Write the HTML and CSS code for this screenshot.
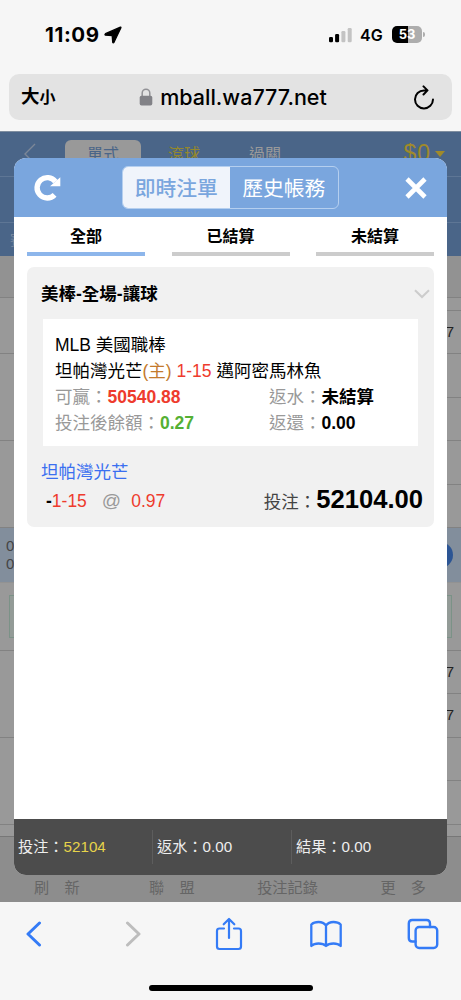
FILE: index.html
```
<!DOCTYPE html>
<html lang="zh-Hant">
<head>
    <meta charset="UTF-8">
    <meta name="viewport" content="width=device-width, initial-scale=1.0">
    <title>即時注單</title>
    <link rel="stylesheet" href="styles.css">
</head>
<body>

<div class="phone">
    <!-- Status bar -->
    <div class="status-bar">
        <span class="time">11:09</span>
        <svg class="location" width="18" height="18" viewBox="0 0 18 18"><path d="M16.4 1.2 1.5 7.7Q.4 8.6 1.5 9.2L8.2 9.6 8.7 16.2Q9.2 17.4 10 16.3L16.9 1.7Q17.1.9 16.4 1.2Z" stroke="#000" stroke-width="1.3" stroke-linejoin="round"/></svg>
        <svg class="signal" width="24" height="16" viewBox="0 0 24 16">
            <rect x="0" y="10" width="4" height="5.3" rx="1.2"/>
            <rect x="6.1" y="7" width="4" height="8.3" rx="1.2"/>
            <rect x="12.4" y="4" width="4" height="11.3" rx="1.2" fill="#c3c3c3"/>
            <rect x="18.7" y="1" width="4" height="14.3" rx="1.2" fill="#c3c3c3"/>
        </svg>
        <span class="network">4G</span>
        <div class="battery"><span>53</span></div>
    </div>

    <!-- Address bar -->
    <div class="address-bar">
        <span class="text-size">大<small>小</small></span>
        <div class="url">
            <svg width="14" height="18" viewBox="0 0 14 18"><path d="M3.2 9V5a3.8 3.8 0 0 1 7.6 0v4" fill="none" stroke="#929296" stroke-width="1.5"/><rect x=".7" y="7.7" width="12.6" height="9.8" rx="1.8" fill="#828287"/></svg>
            <span>mball.wa777.net</span>
        </div>
        <svg class="reload" width="22" height="25" viewBox="0 0 22 25" fill="none" stroke="#000" stroke-width="2" stroke-linecap="round" stroke-linejoin="round"><path d="M13 5.4H11A9 9 0 1 0 20 14.5M10.5 1.4 14.5 5.4 10.5 9.5"/></svg>
    </div>

    <!-- Web page -->
    <div class="page">
        <div class="top-nav">
            <svg class="back" width="12" height="22" viewBox="0 0 12 22" fill="none" stroke="#7c8797" stroke-width="1.4"><path d="M11 1 1 11 11 21"/></svg>
            <span class="nav-tab active">單式</span>
            <span class="nav-tab yellow">滾球</span>
            <span class="nav-tab">過關</span>
            <span class="balance">$0<i></i></span>
        </div>
        <div class="sub-nav"></div>
        <div class="sub-nav last">賽</div>

        <div class="odds">
            <div class="odds-col">
                <div class="cell gap-row"></div>
                <div class="cell first"></div>
                <div class="cell tall"></div>
                <div class="cell tall"></div>
            </div>
            <div class="odds-col right">
                <div class="cell gap-row"></div>
                <div class="cell thin"></div>
                <div class="cell">7</div>
                <div class="cell"></div>
                <div class="cell"></div>
                <div class="cell"></div>
                <div class="cell"></div>
            </div>
        </div>
        <div class="match">
            <div>0<br>0</div>
            <span class="plus">+</span>
        </div>
        <div class="team-row"><div class="team-box"></div></div>
        <div class="odds">
            <div class="odds-col">
                <div class="cell tall"></div>
                <div class="cell tall"></div>
            </div>
            <div class="odds-col right">
                <div class="cell">7</div>
                <div class="cell">7</div>
                <div class="cell"></div>
                <div class="cell"></div>
            </div>
        </div>
        <div class="page-space"></div>
        <div class="page-menu">
            <span>刷　新</span>
            <span class="league">聯　盟</span>
            <span>投注記錄</span>
            <span>更　多</span>
        </div>

        <!-- Bet list popup -->
        <div class="modal">
            <div class="modal-header">
                <svg width="28" height="28" viewBox="0 0 28 28"><path d="M20.6 20.9A10.2 10.2 0 1 1 21.4 7.6" fill="none" stroke="#fff" stroke-width="5.4"/><path d="M26.3 3.2V12.3H16Z" fill="#fff"/></svg>
                <div class="switch">
                    <span class="selected">即時注單</span>
                    <span>歷史帳務</span>
                </div>
                <svg width="22" height="22" viewBox="0 0 22 22"><path d="M2 2 20 20M20 2 2 20" stroke="#fff" stroke-width="4.6"/></svg>
            </div>

            <div class="filters">
                <span class="active">全部</span>
                <span>已結算</span>
                <span>未結算</span>
            </div>

            <div class="bet-card">
                <div class="bet-title">
                    <span>美棒-全場-讓球</span>
                    <svg width="16" height="10" viewBox="0 0 16 10" fill="none" stroke="#ccc" stroke-width="2"><path d="M1 1.2 8 8 15 1.2"/></svg>
                </div>
                <div class="bet-detail">
                    <div>MLB 美國職棒</div>
                    <div>坦帕灣光芒<span class="home">(主)</span> <span class="red">1-15</span> 邁阿密馬林魚</div>
                    <div class="detail-row">
                        <div>可贏：<b class="red">50540.88</b></div>
                        <div>返水：<b>未結算</b></div>
                    </div>
                    <div class="detail-row">
                        <div>投注後餘額：<b class="green">0.27</b></div>
                        <div>返還：<b>0.00</b></div>
                    </div>
                </div>
                <div class="bet-team">坦帕灣光芒</div>
                <div class="bet-bottom">
                    <div class="odd"><b>-</b><span class="red">1-15</span><span class="at">@</span><span class="red">0.97</span></div>
                    <div class="stake">投注：<b>52104.00</b></div>
                </div>
            </div>

            <div class="modal-footer">
                <div>投注：<span class="gold">52104</span></div>
                <div>返水：0.00</div>
                <div>結果：0.00</div>
            </div>
        </div>
    </div>

    <!-- Browser toolbar -->
    <div class="toolbar">
        <svg width="40" height="26" viewBox="0 0 16 26" stroke-width="3"><path d="M13.5 2 2 13 13.5 24"/></svg>
        <svg class="disabled" width="40" height="26" viewBox="0 0 16 26" stroke-width="3"><path d="M2.5 2 14 13 2.5 24"/></svg>
        <svg width="40" height="34" viewBox="0 0 28 34" stroke-width="2.2"><path d="M9 11.5H4.5Q2 11.5 2 14V29.5Q2 32 4.5 32H23.5Q26 32 26 29.5V14Q26 11.5 23.5 11.5H19M14 21V2.5M8.7 7.3 14 2 19.3 7.3"/></svg>
        <svg width="40" height="28" viewBox="0 0 33 28" stroke-width="2.3"><path d="M16.5 5.5Q14 2 9 2 4.5 2 1.8 4.5V26Q4.5 23.5 9 23.5 14 23.5 16.5 26 19 23.5 24 23.5 28.5 23.5 31.2 26V4.5Q28.5 2 24 2 19 2 16.5 5.5V26"/></svg>
        <svg width="40" height="32" viewBox="0 0 32 32" stroke-width="2.4"><rect x="8.6" y="9" width="21.6" height="21" rx="3.5"/><path d="M8.5 23.5H5.3Q1.8 23.5 1.8 20V5.5Q1.8 2 5.3 2H19.5Q23 2 23 5.5V9"/></svg>
    </div>
    <div class="home-bar"></div>
</div>

</body>
</html>
```

FILE: styles.css
```
* {
    box-sizing: border-box;
}

body {
    margin: 0;
    font-family: "Liberation Sans", "Noto Sans CJK TC", sans-serif;
    background-color: #f6f6f6;
    color: #000;
}

.phone {
    width: 461px;
    height: 1000px;
    overflow: hidden;
}

svg {
    display: block;
    flex: none;
}

/* Status bar */
.status-bar {
    display: flex;
    align-items: center;
    height: 74px;
    padding: 0 39px 5px 45px;
    font-family: Inter, sans-serif;
}

.time {
    width: 59px;
    font-size: 20.5px;
    font-weight: 700;
    letter-spacing: 0.6px;
}

.signal {
    margin-left: auto;
}

.network {
    width: 32px;
    margin-left: 7px;
    font-size: 16px;
    font-weight: 600;
}

.battery {
    position: relative;
    width: 30px;
    height: 17px;
    border-radius: 5px;
    background: linear-gradient(90deg, #000 53%, #adadad 53%);
    color: #fff;
    font-size: 13px;
    font-weight: 700;
    line-height: 17px;
    text-align: center;
}

.battery::after {
    content: "";
    position: absolute;
    right: -3px;
    top: 6px;
    width: 2px;
    height: 5px;
    border-radius: 0 2px 2px 0;
    background: #adadad;
}

/* Address bar */
.address-bar {
    display: flex;
    align-items: center;
    justify-content: space-between;
    height: 46px;
    margin: 0 9px 11px;
    padding: 0 17px 0 12px;
    border-radius: 10px;
    background: #e3e3e3;
}

.text-size {
    width: 50px;
    font-size: 18.5px;
    font-weight: 700;
    line-height: 46px;
}

.text-size small {
    font-size: 16px;
}

.url {
    display: flex;
    align-items: center;
    gap: 7px;
    margin-right: 18px;
    font-family: Inter, sans-serif;
    font-size: 21.5px;
    font-weight: 500;
}

/* Page behind the popup */
.page {
    position: relative;
    height: 771px;
    background: #999;
    overflow: hidden;
}

.top-nav {
    display: flex;
    align-items: flex-start;
    height: 45px;
    padding: 8px 16px 0 24px;
    background: #4a6588;
    border-top: 1px solid #7f8ea0;
    color: #9a9a9a;
    font-size: 16px;
}

.back {
    margin-top: 3px;
}

.nav-tab {
    width: 76px;
    height: 32px;
    margin-left: 5px;
    border-radius: 6px 6px 0 0;
    line-height: 30px;
    text-align: center;
}

.nav-tab.active {
    margin-left: 29px;
    background: #999;
    color: #4a6588;
}

.nav-tab.yellow {
    color: #94882c;
}

.balance {
    display: flex;
    align-items: center;
    gap: 4px;
    margin-left: auto;
    color: #a08a2a;
    font-size: 23px;
    line-height: 27px;
    letter-spacing: 1px;
}

.balance i {
    border: 5px solid transparent;
    border-top: 6px solid #a08a2a;
    border-bottom: 0;
}

.sub-nav {
    height: 46px;
    border-top: 1px solid #5e7695;
    background: #4a6588;
}

.sub-nav.last {
    height: 34px;
    padding-left: 10px;
    color: #7c8ba0;
    font-size: 14px;
    line-height: 34px;
}

.odds {
    display: flex;
}

.odds-col {
    flex: 1;
}

.cell {
    height: 43.4px;
    border-bottom: 1px solid #828282;
}

.cell.gap-row {
    height: 42px;
    background: #929292;
}

.cell.first {
    height: 56px;
}

.cell.tall {
    height: 86.8px;
}

.cell.thin {
    height: 13px;
}

.odds-col.right .cell {
    padding-right: 7px;
    color: #222;
    font-size: 15px;
    line-height: 42px;
    text-align: right;
}

.match {
    display: flex;
    align-items: center;
    justify-content: space-between;
    height: 55px;
    padding: 0 8px 0 6px;
    background: #828e9c;
    border-bottom: 1px solid #929292;
    color: #444;
    font-size: 15px;
    line-height: 18px;
}

.plus {
    width: 26px;
    height: 26px;
    border-radius: 50%;
    background: #2c5594;
    color: #bbb;
    line-height: 26px;
    text-align: center;
}

.team-row {
    height: 68px;
    padding: 12px 9px;
    border-bottom: 1px solid #828282;
}

.team-box {
    height: 43px;
    border: 1px solid #7b9287;
    background: #939b97;
}

.page-space {
    height: 11px;
}

.page-menu {
    display: flex;
    justify-content: space-between;
    height: 70px;
    padding: 39px 35px 0 34px;
    border-top: 1px solid #777;
    background: #8d8d8d;
    color: #656565;
    font-size: 15.2px;
    line-height: 24px;
}

.league {
    padding-left: 7px;
}

/* Popup */
.modal {
    position: absolute;
    top: 27px;
    left: 14px;
    display: flex;
    flex-direction: column;
    width: 433px;
    height: 717px;
    border-radius: 12px;
    background: #fff;
    overflow: hidden;
}

.modal-header {
    display: flex;
    align-items: center;
    justify-content: space-between;
    height: 59px;
    padding: 0 20px 0 20px;
    background: #7aa6de;
}

.switch {
    display: flex;
    height: 43px;
    margin-left: -7px;
    border: 1px solid #b5cfef;
    border-radius: 6px;
    color: #fff;
    font-size: 20.8px;
    line-height: 44px;
    overflow: hidden;
}

.switch span {
    width: 107.5px;
    text-align: center;
}

.switch .selected {
    background: #f0f4fb;
    color: #7aa6de;
    font-weight: 500;
}

.filters {
    display: flex;
    justify-content: space-between;
    padding: 0 13px;
}

.filters span {
    width: 118px;
    height: 39px;
    border-bottom: 4px solid #ccc;
    font-size: 16px;
    font-weight: 700;
    line-height: 39px;
    text-align: center;
}

.filters .active {
    border-color: #8db6eb;
}

.bet-card {
    height: 260px;
    margin: 11px 13px 0;
    border-radius: 7px;
    background: #f1f1f1;
    font-size: 17.5px;
    line-height: 26px;
}

.bet-title {
    display: flex;
    align-items: center;
    justify-content: space-between;
    height: 52px;
    padding: 1px 4px 0 14px;
    font-weight: 700;
}

.bet-detail {
    height: 127px;
    margin: 0 16px;
    padding: 13px 12px 0;
    background: #fff;
}

.bet-detail > div {
    height: 26px;
    white-space: nowrap;
}

.detail-row {
    display: grid;
    grid-template-columns: 214px 1fr;
    color: #999;
}

.detail-row b {
    color: #000;
}

.home {
    color: #c37a2c;
}

.red,
.detail-row .red {
    color: #ee3b2d;
}

.detail-row .green {
    color: #55b034;
}

.bet-team {
    height: 36px;
    padding: 13px 14px 0;
    color: #3a6ff0;
}

.bet-bottom {
    display: flex;
    justify-content: space-between;
    padding: 0 11px 0 19px;
    line-height: 34px;
}

.odd {
    padding-top: 2px;
}

.at {
    margin: 0 10px 0 15px;
    color: #999;
    font-size: 19px;
}

.stake {
    color: #444;
}

.stake b {
    color: #000;
    font-size: 25.6px;
}

.modal-footer {
    display: grid;
    grid-template-columns: 138px 139px 1fr;
    align-items: center;
    height: 56px;
    margin-top: auto;
    background: #4c4c4c;
    color: #eee;
    font-size: 15.2px;
}

.modal-footer div {
    height: 34px;
    padding-left: 4px;
    line-height: 33px;
}

.modal-footer div + div {
    border-left: 1px solid #5d5d5d;
}

.gold {
    color: #e6d34a;
}

/* Browser toolbar */
.toolbar {
    display: flex;
    align-items: center;
    justify-content: space-between;
    height: 63px;
    padding: 0 18px 0 14px;
    fill: none;
    stroke: #347bf6;
    stroke-linecap: round;
    stroke-linejoin: round;
}

.toolbar .disabled {
    margin: 0 -2px 0 2px;
    stroke: #bdbdbd;
}

.home-bar {
    width: 164px;
    height: 6px;
    margin: 20px auto 0;
    border-radius: 3px;
    background: #000;
}
```
